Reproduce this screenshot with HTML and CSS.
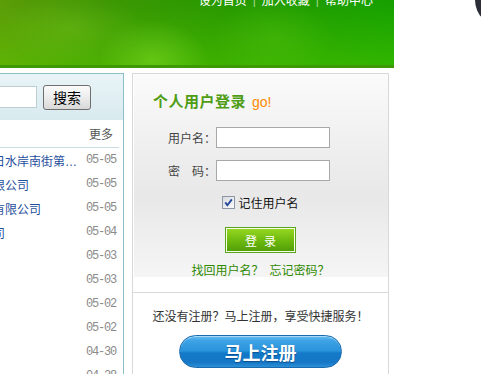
FILE: index.html
```html
<!DOCTYPE html>
<html lang="zh-CN">
<head>
<meta charset="utf-8">
<title>个人用户登录</title>
<link rel="stylesheet" href="styles.css">
</head>
<body>
<div class="page">
  <header class="top">
    <nav class="toplinks">
      <a>设为首页</a><span class="sep">|</span><a>加入收藏</a><span class="sep">|</span><a>帮助中心</a>
    </nav>
  </header>
  <div class="main">
    <section class="news">
      <div class="search">
        <input class="search-input" type="text">
        <button class="search-btn" type="button">搜索</button>
      </div>
      <div class="news-body">
        <div class="news-head"><a class="more">更多</a></div>
        <ul class="news-list">
          <li><a class="title">天河区珠江新城东朝日水岸南街第<span class="ell">…</span></a><span class="date">05-05</span></li>
          <li><a class="title">广州天河科技发展有限公司</a><span class="date">05-05</span></li>
          <li><a class="title">深圳市南山区科技园有限公司</a><span class="date">05-05</span></li>
          <li><a class="title">上海浦东新区贸易公司</a><span class="date">05-04</span></li>
          <li><a class="title">年度会员大会通知</a><span class="date">05-03</span></li>
          <li><a class="title">网站系统升级公告</a><span class="date">05-03</span></li>
          <li><a class="title">新会员注册指南</a><span class="date">05-02</span></li>
          <li><a class="title">关于假期安排通知</a><span class="date">05-02</span></li>
          <li><a class="title">服务协议更新说明</a><span class="date">04-30</span></li>
          <li><a class="title">常见问题解答</a><span class="date">04-28</span></li>
        </ul>
      </div>
    </section>
    <section class="login-box">
      <div class="login">
        <h2 class="login-title">个人用户登录<span class="go">go!</span></h2>
        <div class="field"><label>用户名：</label><input type="text"></div>
        <div class="field"><label>密　码：</label><input type="password"></div>
        <div class="remember">
          <svg class="check" width="13" height="13" viewBox="0 0 13 13"><defs><linearGradient id="cb" x1="0" y1="0" x2="1" y2="1"><stop offset="0" stop-color="#d6d8dc"/><stop offset="1" stop-color="#fcfcfc"/></linearGradient></defs><rect x=".5" y=".5" width="12" height="12" fill="url(#cb)" stroke="#8c98a6"/><path d="M3.3 6.4 L5.4 9.2 L9.8 3.4" fill="none" stroke="#24479a" stroke-width="1.9"/></svg>
          <span>记住用户名</span>
        </div>
        <button class="login-btn" type="button">登录</button>
        <div class="find"><a>找回用户名？</a><a>忘记密码？</a></div>
      </div>
      <div class="register">
        <p>还没有注册？马上注册，享受快捷服务！</p>
        <button class="reg-btn" type="button">马上注册</button>
      </div>
    </section>
  </div>
</div>
<div class="orb"></div>
</body>
</html>
```

FILE: styles.css
```css
html, body {
  margin: 0;
  padding: 0;
  background: #fff;
  overflow: hidden;
}
body {
  font-family: "Liberation Sans", "Noto Sans CJK SC", sans-serif;
  font-size: 12px;
  color: #333;
}
a { text-decoration: none; cursor: pointer; }

.page {
  width: 521px;
  margin: -22px 0 0 -127px;
}

/* header */
.top {
  height: 87px;
  border-bottom: 3px solid #3d9a06;
  background:
    radial-gradient(ellipse 55px 40px at 280px 82px, rgba(150,235,50,.38), rgba(150,235,50,.12) 70%, rgba(150,235,50,0) 100%),
    radial-gradient(ellipse 70px 35px at 200px 50px, rgba(170,225,60,.18), rgba(170,225,60,0) 100%),
    radial-gradient(ellipse 60px 40px at 400px 60px, rgba(140,230,40,.16), rgba(140,230,40,0) 100%),
    linear-gradient(to bottom, rgba(100,220,0,0) 30%, rgba(100,220,0,.35) 100%),
    linear-gradient(90deg, #6aa20c 0, #5c9d08 127px, #3d9703 230px, #279a00 360px, #16a100 521px);
}
.toplinks {
  display: flex;
  justify-content: flex-end;
  padding: 13px 21px 0 0;
  line-height: 18px;
  font-family: "Noto Sans CJK SC", sans-serif;
  color: #fff;
}
.toplinks a { color: #fff; }
.toplinks .sep {
  font-family: "Liberation Sans", sans-serif;
  padding: 0 6px;
  color: rgba(255,255,255,.6);
}

.main {
  display: flex;
  align-items: flex-start;
  gap: 8px;
  margin-top: 5px;
}

/* left news panel */
.news {
  box-sizing: border-box;
  width: 251px;
  height: 340px;
  border: 1px solid #8dbfc9;
  background: #fff;
}
.search {
  height: 46px;
  display: flex;
  align-items: center;
  justify-content: flex-end;
  gap: 6px;
  padding-right: 32px;
  background: linear-gradient(#e9f4f7, #d8eaef);
}
.search-input {
  box-sizing: border-box;
  width: 150px;
  height: 22px;
  border: 1px solid #bccfd4;
  background: #fff;
  margin: 0;
}
.search-btn {
  box-sizing: border-box;
  width: 48px;
  height: 25px;
  margin: 0;
  padding: 0;
  border: 1px solid #6f6f6f;
  border-radius: 3px;
  background: linear-gradient(#fbfbfb, #ececec 50%, #d8d8d8);
  font-family: "Noto Sans CJK SC", sans-serif;
  font-size: 14px;
  color: #000;
}
.news-body { margin-right: 4px; }
.news-head {
  height: 27px;
  line-height: 27px;
  text-align: right;
  padding-right: 6px;
  border-bottom: 1px solid #c7dde2;
}
.more {
  font-family: "Noto Sans CJK SC", sans-serif;
  color: #555;
}
.news-list {
  list-style: none;
  margin: 0;
  padding: 0 3px 0 11px;
}
.news-list li {
  display: flex;
  align-items: center;
  height: 24px;
}
.title {
  flex: 1;
  min-width: 0;
  overflow: hidden;
  white-space: nowrap;
  font-family: "Noto Sans CJK SC", sans-serif;
  color: #1f4f9d;
}
.ell { font-family: "Liberation Sans", sans-serif; }
.date {
  font-family: "Liberation Mono", monospace;
  font-size: 12px;
  letter-spacing: -1.2px;
  width: 30px;
  color: #8a8a8a;
}

/* right login panel */
.login-box {
  box-sizing: border-box;
  width: 257px;
  height: 340px;
  border: 1px solid #d8d8d8;
  background: #fff;
}
.login {
  box-sizing: border-box;
  height: 219px;
  padding-top: 17px;
  border-bottom: 1px solid #d9d9d9;
  background: linear-gradient(#fbfbfb 0%, #efefef 35%, #e8e8e8 60%, #f5f5f5 100%) 1px 0 / calc(100% - 1px) 203px no-repeat;
  font-family: "Noto Sans CJK SC", sans-serif;
}
.login-title {
  margin: 0 0 0 20px;
  height: 20px;
  line-height: 20px;
  font-size: 15px;
  font-weight: bold;
  letter-spacing: .5px;
  color: #4f9d14;
}
.go {
  font-family: "Liberation Sans", sans-serif;
  font-size: 14px;
  font-weight: normal;
  letter-spacing: 0;
  color: #ff8a00;
  margin-left: 6px;
}
.field {
  display: flex;
  align-items: center;
  padding-left: 35px;
  margin-top: 16px;
}
.field + .field { margin-top: 12px; }
.field label {
  width: 48px;
  color: #444;
}
.field input {
  box-sizing: border-box;
  width: 114px;
  height: 21px;
  margin: 0;
  border: 1px solid #a8a8a8;
  background: #fff;
}
.remember {
  display: flex;
  align-items: center;
  justify-content: center;
  height: 16px;
  margin-top: 13px;
  color: #111;
  gap: 3px;
}
.check { display: block; }
.login-btn {
  display: block;
  box-sizing: border-box;
  width: 71px;
  height: 26px;
  margin: 17px auto 0;
  padding: 0 0 0 7px;
  border: 1px solid #5aa51c;
  box-shadow: inset 0 0 0 1px #f4ffe6;
  background: linear-gradient(#9ad824, #6fbb0f 50%, #4f9c06);
  color: #fff;
  font-family: "Noto Sans CJK SC", sans-serif;
  font-size: 12px;
  letter-spacing: 7px;
}
.find {
  display: flex;
  justify-content: center;
  gap: 6px;
  margin-top: 9px;
  line-height: 16px;
}
.find a { color: #2f8a00; }

.register {
  padding-top: 15px;
  text-align: center;
  font-family: "Noto Sans CJK SC", sans-serif;
}
.register p {
  margin: 0;
  line-height: 16px;
  color: #333;
}
.reg-btn {
  box-sizing: border-box;
  width: 163px;
  height: 33px;
  margin: 11px 0 0;
  padding: 0;
  border: 1px solid #1a6aae;
  border-radius: 17px;
  background: linear-gradient(#66bdf0 0%, #3ea3e6 15%, #2a93dc 48%, #1279c8 55%, #1677c6 85%, #2d8fd6 100%);
  box-shadow: inset 0 1px 0 rgba(255,255,255,.45);
  color: #fff;
  font-family: "Noto Sans CJK SC", sans-serif;
  font-size: 18px;
  font-weight: bold;
  text-shadow: 0 1px 1px rgba(0,40,90,.5);
}

.orb {
  position: fixed;
  left: 475px;
  top: -27px;
  width: 54px;
  height: 54px;
  border-radius: 50%;
  background: #2c2f38;
}
```
